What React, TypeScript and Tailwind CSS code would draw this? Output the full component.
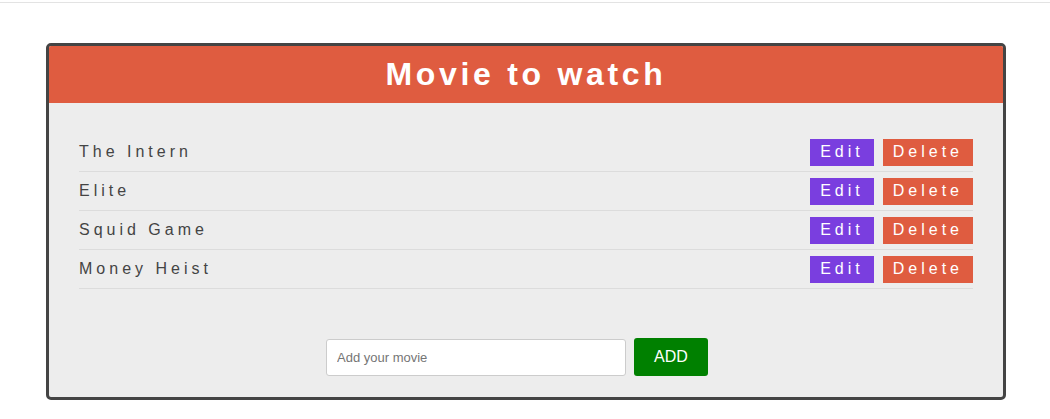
import React from "react";

const movies = ["The Intern", "Elite", "Squid Game", "Money Heist"];

export default function App() {
  return (
    <div className="min-h-[419px] bg-white" style={{ fontFamily: '"Liberation Sans", Arial, sans-serif' }}>
      <div className="h-[3px] border-b border-[#e3e3e3]" />
      <div className="ml-[46px] mt-[40px] w-[960px] rounded-[5px] border-[3px] border-[#444444] bg-[#ededed] overflow-hidden">
        <div className="flex h-[57px] items-center justify-center bg-[#df5c40] pb-[2px]">
          <h1 className="text-[32px] font-bold leading-none tracking-[3.7px] text-white">Movie to watch</h1>
        </div>
        <div className="px-[30px] pt-[30px]">
          <ul>
            {movies.map((m) => (
              <li key={m} className="flex h-[39px] items-center justify-between border-b border-[#dcdcdc]">
                <span className="text-[16px] tracking-[4px] text-[#444444]">{m}</span>
                <div className="flex gap-[9px]">
                  <button className="flex h-[27px] items-center bg-[#7a3edf] px-[10px] text-[16px] tracking-[4px] text-white">Edit</button>
                  <button className="flex h-[27px] items-center bg-[#df5c40] px-[10px] text-[16px] tracking-[4px] text-white">Delete</button>
                </div>
              </li>
            ))}
          </ul>
        </div>
        <div className="flex items-center justify-center gap-[8px] pr-[18px] pt-[49px] pb-[21px]">
          <input
            placeholder="Add your movie"
            className="h-[37px] w-[300px] rounded-[3px] border border-[#cccccc] bg-white px-[10px] text-[13px] text-[#333] placeholder:text-[#757575] outline-none"
          />
          <button className="h-[38px] w-[74px] rounded-[3px] bg-[#008000] text-[16px] text-white">ADD</button>
        </div>
      </div>
    </div>
  );
}
